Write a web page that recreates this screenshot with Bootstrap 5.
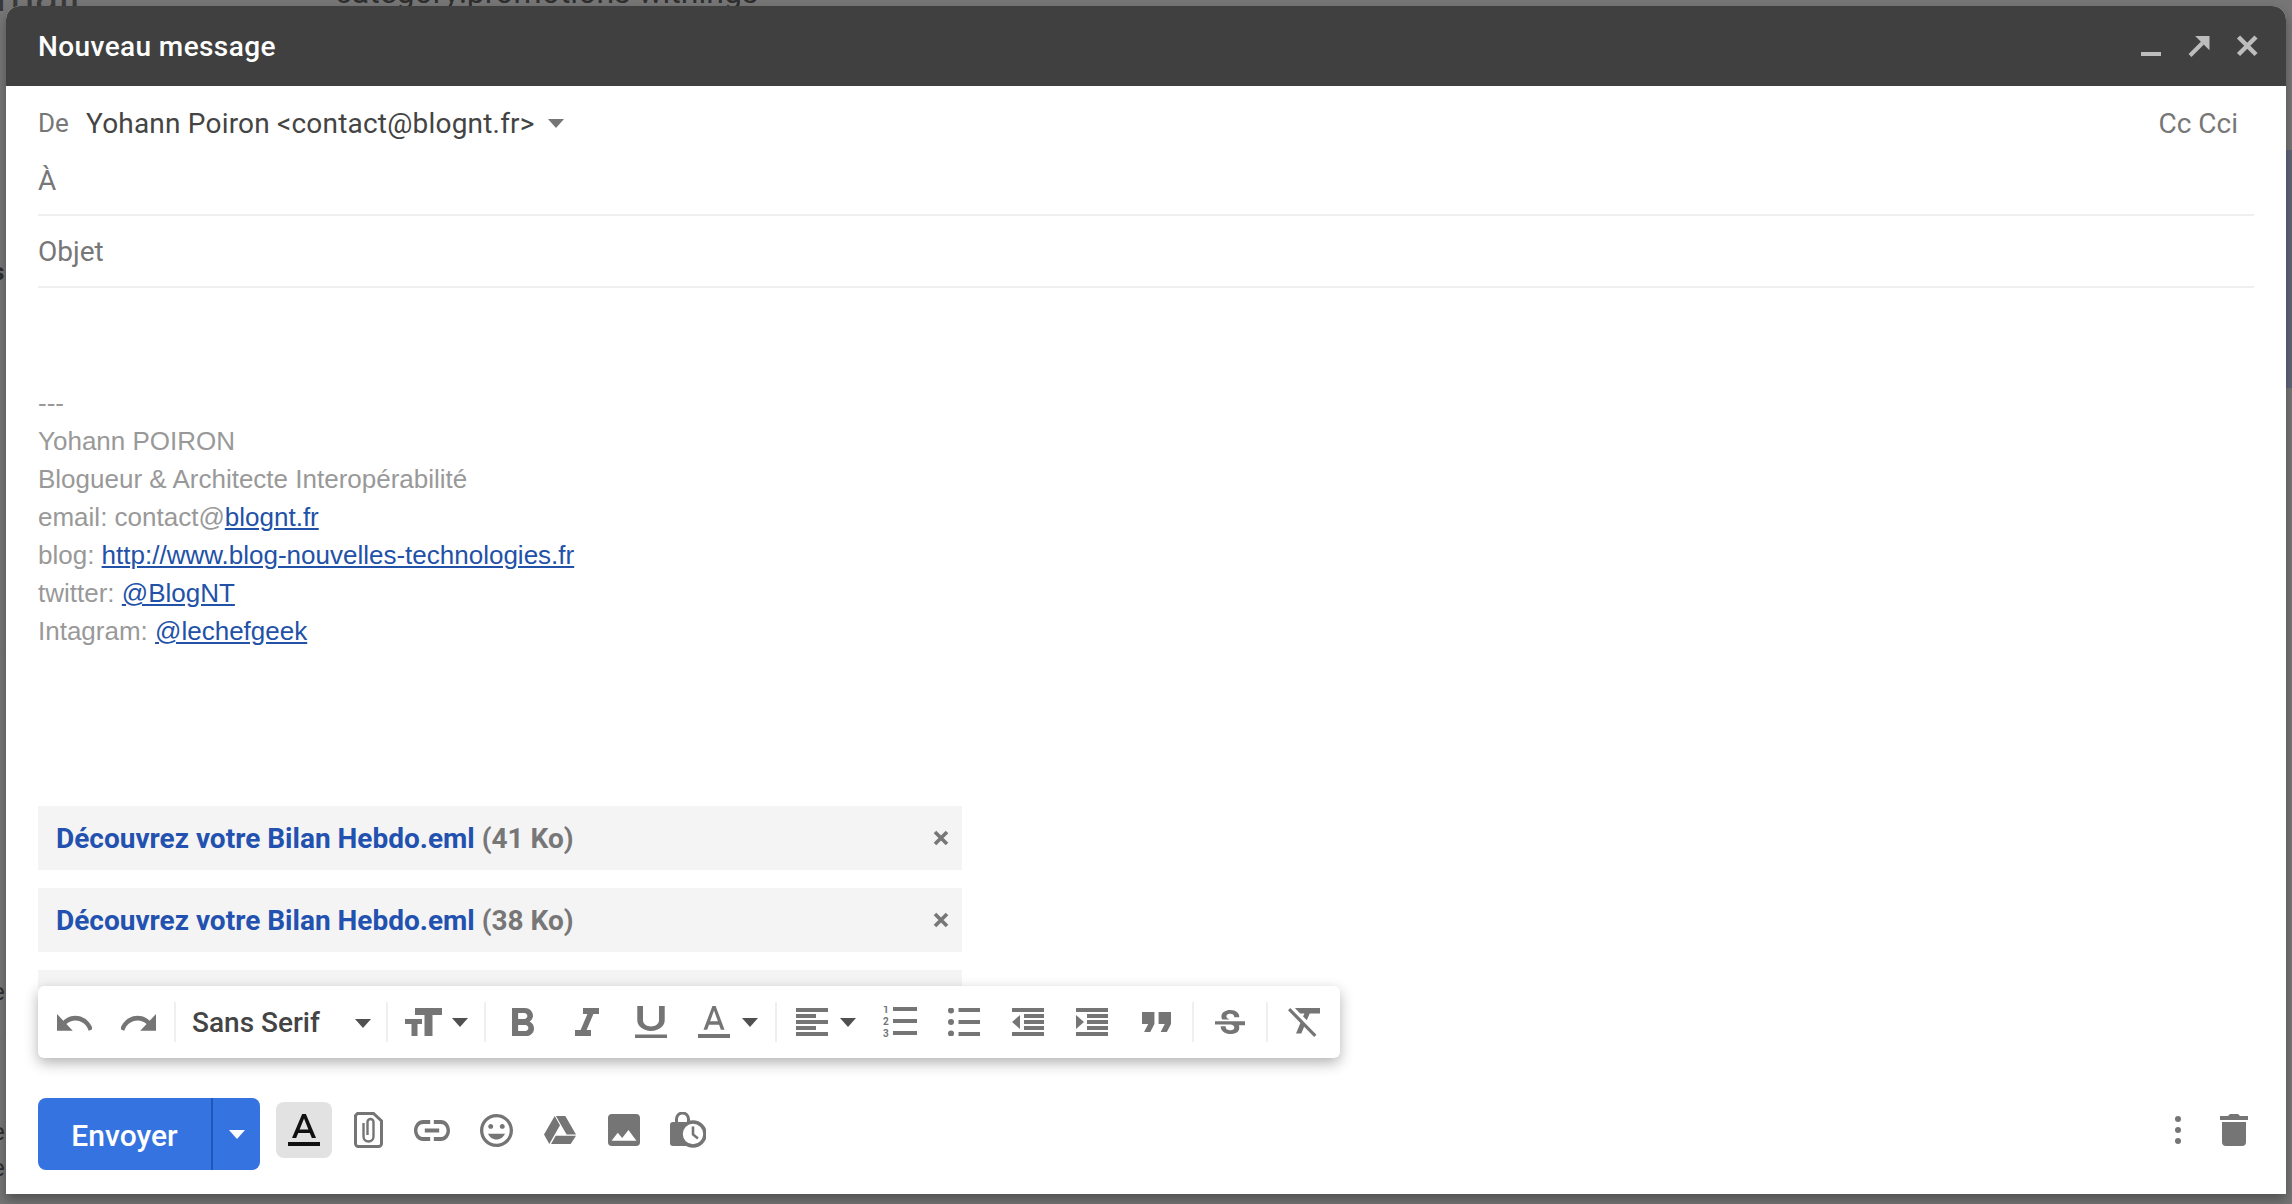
<!DOCTYPE html>
<html lang="fr">
<head>
<meta charset="utf-8">
<title>Nouveau message</title>
<link href="https://cdn.jsdelivr.net/npm/bootstrap@5.3.0/dist/css/bootstrap.min.css" rel="stylesheet">
<style>
html,body{height:100%;margin:0;overflow:hidden}
body{background:#767676;font-family:Roboto,"Liberation Sans",sans-serif;padding:6px 6px 10px 6px;position:relative}
svg{display:block;flex:none}
.ic-g{fill:#757575}
/* backdrop peeking around the window */
.bk-txt{position:absolute;color:#2e2e2e;font-size:32px;line-height:1;white-space:nowrap}
.bk-top1{left:335px;top:-24px}
.bk-top2{left:-4px;top:-26px;font-size:44px;color:#3a3a3a}
.bk-blue{position:absolute;right:0;top:150px;width:6px;height:238px;background:#5f6679}
.bk-l{position:absolute;left:-8px;font-size:24px;line-height:1;color:#2e2e2e}
.bk-l1{top:260px;font-weight:700}.bk-l2{top:645px}.bk-l3{top:980px}.bk-l4{top:1031px}.bk-l5{top:1120px}.bk-l6{top:1156px}
/* window */
.cmp-win{height:1188px;background:#fff;border-radius:14px 14px 0 0;box-shadow:0 6px 12px rgba(0,0,0,.32);overflow:hidden;position:relative;z-index:1}
.cmp-head{height:80px;background:#404040;color:#fff;padding:0 15.5px 0 32px;font-size:28px;font-weight:500;letter-spacing:.4px;flex:none}
.cmp-title{padding-top:2px}
.cmp-body{padding:0 32px 0 32px;flex:1;min-height:0;overflow:hidden}
.cmp-from{height:58px;padding-top:17px;font-size:28px;line-height:42px;color:#444}
.cmp-lbl{color:#777}
.cmp-de{font-size:26px;width:48px;color:#777;margin-top:-2px}
.cmp-yo{letter-spacing:.2px}
.cmp-car{width:0;height:0;border-left:8px solid transparent;border-right:8px solid transparent;border-top:9px solid #757575;display:block;flex:none}
.cmp-car-de{margin-left:13px}
.cmp-cc{color:#777;margin-right:16px}
.cmp-to{height:72px;padding-top:16px;border-bottom:2px solid #efefef;font-size:28px;line-height:42px;color:#777}
.cmp-subj{height:72px;border-bottom:2px solid #efefef;font-size:28px;line-height:42px;color:#777;padding-top:2px}
.cmp-sig{margin-top:96px;font-family:"Liberation Sans",sans-serif;font-size:26px;line-height:38px;color:#999}
.cmp-sig a{color:#2251a8;text-decoration:underline}
.cmp-atts{margin-top:156px}
.cmp-att{width:924px;height:64px;background:#f4f4f4;margin-bottom:18px;padding:0 13px 0 18px;font-size:28px;font-weight:700;color:#777}
.cmp-att-t{padding-top:2px}
.cmp-name{color:#2251b0}
/* formatting toolbar */
.cmp-fmt{position:absolute;left:32px;top:980px;width:1302px;height:72px;background:#fff;border-radius:6px;box-shadow:0 5px 14px rgba(0,0,0,.3);padding-left:4px;z-index:2}
.cmp-sep{width:2px;height:40px;background:#efefef;flex:none}
.cmp-sl{width:64px;height:72px;flex:none}
.cmp-sl72{width:72px}
.cmp-sep-a{margin-left:4px}
.cmp-fam{width:210px;padding:2px 15px 0 16px;font-size:28px;font-weight:500;color:#444;height:72px}
.cmp-dark{border-top-color:#505050}
.cmp-tsize{width:96px;height:72px;padding-left:17px}
.cmp-gap{margin-left:10px}
.cmp-col{width:92px;height:72px;padding-left:15px}
.cmp-ali{width:91px;height:72px;padding-left:19px}
.cmp-gap2{margin-left:12px}
.cmp-b5{margin-left:5px}
/* bottom bar */
.cmp-bar{padding:0 38px 24px 32px;flex:none}
.cmp-send{width:222px;height:72px;background:#3574e0;border-radius:8px;color:#fff;font-size:30px;font-weight:500;overflow:hidden}
.cmp-send-t{width:173px;padding-top:2px}
.cmp-send-s{width:2px;background:#1f58b8}
.cmp-send-c{flex:1}
.cmp-white{border-top-color:#fff}
.cmp-tf-w{margin-left:12px}
.cmp-tf{width:56px;height:56px;background:#e2e2e2;border-radius:8px}
.cmp-b{width:64px;height:64px}
.cmp-trash{width:28px;height:64px;margin-left:10px}
</style>
</head>
<body>
<span class="bk-txt bk-top2">mail</span>
<span class="bk-txt bk-top1">category:promotions withings</span>
<span class="bk-blue"></span>
<span class="bk-l bk-l1">s</span><span class="bk-l bk-l2">r</span><span class="bk-l bk-l3">e</span><span class="bk-l bk-l4">r</span><span class="bk-l bk-l5">e</span><span class="bk-l bk-l6">e</span>

<div class="cmp-win d-flex flex-column">
  <div class="cmp-head d-flex align-items-center justify-content-between">
    <span class="cmp-title">Nouveau message</span>
    <div class="d-flex align-items-center">
      <svg width="48" height="48" viewBox="0 0 48 48" fill="#bdbdbd"><rect x="14" y="30" width="20" height="4"/></svg>
      <svg width="48" height="48" viewBox="0 0 48 48"><g transform="translate(13.5 14)"><path d="M6.6 0H21V14.3z" fill="#bdbdbd"/><path d="M1.5 19.5L14 7" stroke="#bdbdbd" stroke-width="4" fill="none"/></g></svg>
      <svg width="48" height="48" viewBox="0 0 48 48"><path d="M15.5 15L33 32.5M33 15L15.5 32.5" stroke="#bdbdbd" stroke-width="4.5" fill="none"/></svg>
    </div>
  </div>
  <div class="cmp-body">
    <div class="cmp-from d-flex justify-content-between">
      <div class="d-flex align-items-center"><span class="cmp-de">De</span><span class="cmp-yo">Yohann Poiron &lt;contact@blognt.fr&gt;</span><span class="cmp-car cmp-car-de"></span></div>
      <span class="cmp-cc">Cc&nbsp;Cci</span>
    </div>
    <div class="cmp-to">À</div>
    <div class="cmp-subj d-flex align-items-center">Objet</div>
    <div class="cmp-sig">
      <div>---</div>
      <div>Yohann POIRON</div>
      <div>Blogueur &amp; Architecte Interopérabilité</div>
      <div>email: contact@<a href="#">blognt.fr</a></div>
      <div>blog: <a href="#">http://www.blog-nouvelles-technologies.fr</a></div>
      <div>twitter: <a href="#">@BlogNT</a></div>
      <div>Intagram: <a href="#">@lechefgeek</a></div>
    </div>
    <div class="cmp-atts">
      <div class="cmp-att d-flex align-items-center justify-content-between"><span class="cmp-att-t"><span class="cmp-name">Découvrez votre Bilan Hebdo.eml</span> (41 Ko)</span>
        <svg width="16" height="16" viewBox="0 0 16 16"><path d="M2 2l12 12M14 2L2 14" stroke="#777" stroke-width="3.6"/></svg></div>
      <div class="cmp-att d-flex align-items-center justify-content-between"><span class="cmp-att-t"><span class="cmp-name">Découvrez votre Bilan Hebdo.eml</span> (38 Ko)</span>
        <svg width="16" height="16" viewBox="0 0 16 16"><path d="M2 2l12 12M14 2L2 14" stroke="#777" stroke-width="3.6"/></svg></div>
      <div class="cmp-att"></div>
    </div>
  </div>

  <div class="cmp-fmt d-flex align-items-center">
    <div class="cmp-sl d-flex align-items-center justify-content-center"><svg class="ic-g" width="35" height="17" viewBox="2 7 20 9.2" preserveAspectRatio="none"><path d="M12.5 8c-2.65 0-5.05.99-6.9 2.6L2 7v9h9l-3.62-3.62c1.39-1.16 3.16-1.88 5.12-1.88 3.54 0 6.55 2.31 7.6 5.5l2.37-.78C21.08 11.03 17.15 8 12.5 8z"/></svg></div>
    <div class="cmp-sl d-flex align-items-center justify-content-center"><svg class="ic-g" width="35" height="17" viewBox="2 7 20 9.2" preserveAspectRatio="none"><path d="M18.4 10.6C16.55 8.99 14.15 8 11.5 8c-4.65 0-8.58 3.03-9.96 7.22L3.9 16c1.05-3.19 4.05-5.5 7.6-5.5 1.95 0 3.73.72 5.12 1.88L13 16h9V7l-3.6 3.6z"/></svg></div>
    <span class="cmp-sep cmp-sep-a"></span>
    <div class="cmp-fam d-flex align-items-center justify-content-between"><span>Sans Serif</span><span class="cmp-car cmp-dark"></span></div>
    <span class="cmp-sep"></span>
    <div class="cmp-tsize d-flex align-items-center">
      <svg class="ic-g" width="37" height="28" viewBox="0 0 37 28"><path d="M10 0h27v7h-9.5v21h-8V7H10zM0 11h17v5h-4.5v12H6.5V16H0z"/></svg>
      <span class="cmp-car cmp-dark cmp-gap"></span>
    </div>
    <span class="cmp-sep"></span>
    <div class="cmp-sl cmp-b5 d-flex align-items-center justify-content-center"><svg class="ic-g" width="22" height="28" viewBox="7 4 10.75 14" preserveAspectRatio="none"><path d="M15.6 10.79c.97-.67 1.65-1.77 1.65-2.79 0-2.26-1.75-4-4-4H7v14h7.04c2.09 0 3.71-1.7 3.71-3.79 0-1.52-.86-2.82-2.15-3.42zM10 6.5h3c.83 0 1.5.67 1.5 1.5s-.67 1.5-1.5 1.5h-3v-3zm3.5 9H10v-3h3.5c.83 0 1.5.67 1.5 1.5s-.67 1.5-1.5 1.5z"/></svg></div>
    <div class="cmp-sl d-flex align-items-center justify-content-center"><svg class="ic-g" width="24" height="28" viewBox="6 4 12 14" preserveAspectRatio="none"><path d="M10 4v3h2.21l-3.42 8H6v3h8v-3h-2.21l3.42-8H18V4z"/></svg></div>
    <div class="cmp-sl d-flex align-items-center justify-content-center"><svg class="ic-g" width="32" height="32" viewBox="5 3 14 18" preserveAspectRatio="none"><path d="M12 17c3.31 0 6-2.69 6-6V3h-2.5v8c0 1.93-1.57 3.5-3.5 3.5S8.5 12.93 8.5 11V3H6v8c0 3.31 2.69 6 6 6zm-7 2v2h14v-2H5z"/></svg></div>
    <div class="cmp-col d-flex align-items-center">
      <svg class="ic-g" width="32" height="32" viewBox="0 0 32 32"><g transform="translate(5.5 0) scale(1.62 1.7) translate(-5.5 -3)"><path d="M11 3L5.5 17h2.25l1.12-3h6.25l1.12 3h2.25L13 3h-2zm-1.38 9L12 5.67 14.38 12H9.62z"/></g><rect y="28" width="32" height="4"/></svg>
      <span class="cmp-car cmp-dark cmp-gap2"></span>
    </div>
    <span class="cmp-sep"></span>
    <div class="cmp-ali d-flex align-items-center">
      <svg class="ic-g" width="32" height="28" viewBox="0 0 32 28"><path d="M0 0h32v4H0zM0 6h20v4H0zM0 12h32v4H0zM0 18h20v4H0zM0 24h32v4H0z"/></svg>
      <span class="cmp-car cmp-dark cmp-gap2"></span>
    </div>
    <div class="cmp-sl d-flex align-items-center justify-content-center"><svg class="ic-g" width="34" height="32" viewBox="0 0 34 32"><text x="0" y="7" font-family="Roboto,sans-serif" font-size="10" font-weight="700">1</text><text x="0" y="19" font-family="Roboto,sans-serif" font-size="10" font-weight="700">2</text><text x="0" y="31" font-family="Roboto,sans-serif" font-size="10" font-weight="700">3</text><path d="M10 1h24v4H10zM10 13h24v4H10zM10 25h24v4H10z"/></svg></div>
    <div class="cmp-sl d-flex align-items-center justify-content-center"><svg class="ic-g" width="32" height="28" viewBox="0 0 32 28"><circle cx="3" cy="2.5" r="3"/><circle cx="3" cy="14" r="3"/><circle cx="3" cy="25.5" r="3"/><path d="M10.5 0H32v4H10.5zM10.5 12H32v4H10.5zM10.5 24H32v4H10.5z"/></svg></div>
    <div class="cmp-sl d-flex align-items-center justify-content-center"><svg class="ic-g" width="32" height="28" viewBox="0 0 32 28"><path d="M0 0h32v4H0zM12 6h20v4H12zM12 12h20v4H12zM12 18h20v4H12zM0 24h32v4H0zM8 7v14L0 14z"/></svg></div>
    <div class="cmp-sl d-flex align-items-center justify-content-center"><svg class="ic-g" width="32" height="28" viewBox="0 0 32 28"><path d="M0 0h32v4H0zM11 6h21v4H11zM11 12h21v4H11zM11 18h21v4H11zM0 24h32v4H0zM0 7v14l8-7z"/></svg></div>
    <div class="cmp-sl d-flex align-items-center justify-content-center"><svg class="ic-g" width="29" height="20" viewBox="5 7 14 10" preserveAspectRatio="none"><path d="M6 17h3l2-4V7H5v6h3zm8 0h3l2-4V7h-6v6h3z"/></svg></div>
    <span class="cmp-sep cmp-sep-a"></span>
    <div class="cmp-sl cmp-sl72 d-flex align-items-center justify-content-center"><svg class="ic-g" width="30" height="25" viewBox="3 3 18 15.6" preserveAspectRatio="none"><path d="M6.85 7.08C6.85 4.37 9.45 3 12.24 3c1.64 0 3 .49 3.9 1.28.77.65 1.46 1.73 1.46 3.24h-3.01c0-.31-.05-.59-.15-.85-.29-.86-1.2-1.28-2.25-1.28-1.86 0-2.34 1.02-2.34 1.7 0 .48.25.88.74 1.21.38.25.77.48 1.41.7H7.39c-.21-.34-.54-.89-.54-1.92zM21 12v-2H3v2h9.62c1.15.45 1.96.75 1.96 1.97 0 1-.81 1.67-2.28 1.67-1.54 0-2.93-.54-2.93-2.51H6.4c0 .55.08 1.13.24 1.58.81 2.29 3.32 3.3 5.67 3.3 2.25 0 5.27-.88 5.27-3.92 0-.66-.06-1.04-.27-1.58H21z"/></svg></div>
    <span class="cmp-sep"></span>
    <div class="cmp-sl cmp-sl72 d-flex align-items-center justify-content-center"><svg class="ic-g" width="32" height="29" viewBox="2 5 18 16" preserveAspectRatio="none"><path d="M3.27 5L2 6.27l6.97 6.97L6.5 19h3l1.57-3.66L16.73 21 18 19.73 3.55 5.27 3.27 5zM6 5v.18L8.82 8h2.4l-.72 1.68 2.1 2.1L14.21 8H20V5H6z"/></svg></div>
  </div>

  <div class="cmp-bar d-flex align-items-start justify-content-between">
    <div class="d-flex align-items-start">
      <div class="cmp-send d-flex">
        <span class="cmp-send-t d-flex align-items-center justify-content-center">Envoyer</span>
        <span class="cmp-send-s"></span>
        <span class="cmp-send-c d-flex align-items-center justify-content-center"><span class="cmp-car cmp-white"></span></span>
      </div>
      <div class="cmp-b cmp-tf-w d-flex align-items-center justify-content-center">
        <div class="cmp-tf d-flex align-items-center justify-content-center">
          <svg width="32" height="32" viewBox="0 0 32 32" fill="#111"><g transform="translate(4 0) scale(1.85 1.72) translate(-5.5 -3)"><path d="M11 3L5.5 17h2.25l1.12-3h6.25l1.12 3h2.25L13 3h-2zm-1.38 9L12 5.67 14.38 12H9.62z"/></g><rect y="28" width="32" height="4"/></svg>
        </div>
      </div>
      <div class="cmp-b d-flex align-items-center justify-content-center">
        <svg width="29" height="36" viewBox="0 0 29 36"><path d="M3.5 1.5H19.5L27.5 9V31.5a3 3 0 0 1-3 3H4.5a3 3 0 0 1-3-3V3.5z" fill="none" stroke="#757575" stroke-width="3"/><path d="M9.5 11V24.5a5 5 0 0 0 10 0V10a3 3 0 0 0-6 0V23" fill="none" stroke="#757575" stroke-width="2.4"/></svg>
      </div>
      <div class="cmp-b d-flex align-items-center justify-content-center">
        <svg class="ic-g" width="36" height="21" viewBox="2 7 20 10" preserveAspectRatio="none"><path d="M3.9 12c0-1.71 1.39-3.1 3.1-3.1h4V7H7c-2.76 0-5 2.24-5 5s2.24 5 5 5h4v-1.9H7c-1.71 0-3.1-1.39-3.1-3.1zM8 13h8v-2H8v2zm9-6h-4v1.9h4c1.71 0 3.1 1.39 3.1 3.1s-1.39 3.1-3.1 3.1h-4V17h4c2.76 0 5-2.24 5-5s-2.24-5-5-5z"/></svg>
      </div>
      <div class="cmp-b d-flex align-items-center justify-content-center">
        <svg class="ic-g" width="33" height="33" viewBox="2 2 20 20"><path d="M11.99 2C6.47 2 2 6.48 2 12s4.47 10 9.99 10C17.52 22 22 17.52 22 12S17.52 2 11.99 2zM12 20c-4.42 0-8-3.58-8-8s3.58-8 8-8 8 3.58 8 8-3.58 8-8 8zm3.5-9c.83 0 1.5-.67 1.5-1.5S16.33 8 15.5 8 14 8.67 14 9.5s.67 1.5 1.5 1.5zm-7 0c.83 0 1.5-.67 1.5-1.5S9.33 8 8.5 8 7 8.67 7 9.5 7.67 11 8.5 11zm3.5 6.5c2.33 0 4.31-1.46 5.11-3.5H6.89c.8 2.04 2.78 3.5 5.11 3.5z"/></svg>
      </div>
      <div class="cmp-b d-flex align-items-center justify-content-center">
        <svg class="ic-g" width="32" height="28" viewBox="0 0 32 28"><path d="M10.7 0L16 9.2 5.3 28 0 18.5zM11.9 0H21.3L32 18.5H22.6zM11.7 19.8H32L26.7 28H7z"/></svg>
      </div>
      <div class="cmp-b d-flex align-items-center justify-content-center">
        <svg class="ic-g" width="32" height="32" viewBox="3 3 18 18"><path d="M21 19V5c0-1.1-.9-2-2-2H5c-1.1 0-2 .9-2 2v14c0 1.1.9 2 2 2h14c1.1 0 2-.9 2-2zM8.5 13.5l2.5 3.01L14.5 12l4.5 6H5l3.5-4.5z"/></svg>
      </div>
      <div class="cmp-b d-flex align-items-center justify-content-center">
        <svg width="36" height="36" viewBox="0 0 36 36"><path d="M6.5 11V7a6 6 0 0 1 12 0v4" fill="none" stroke="#757575" stroke-width="3"/><rect x="0" y="10" width="26" height="24" rx="3" fill="#757575"/><circle cx="23" cy="22" r="12" fill="#fff" stroke="#757575" stroke-width="3.6"/><path d="M23 14.5V22.5l5 4" fill="none" stroke="#757575" stroke-width="2.6"/></svg>
      </div>
    </div>
    <div class="d-flex align-items-start">
      <div class="cmp-b d-flex align-items-center justify-content-center">
        <svg class="ic-g" width="6" height="28" viewBox="0 0 6 28"><circle cx="3" cy="3" r="3"/><circle cx="3" cy="14" r="3"/><circle cx="3" cy="25" r="3"/></svg>
      </div>
      <div class="cmp-trash d-flex align-items-center">
        <svg class="ic-g" width="28" height="32" viewBox="0 0 28 32"><path d="M10 0h8l2 2h8v4H0V2h8zM2 8h24v20a4 4 0 0 1-4 4H6a4 4 0 0 1-4-4z"/></svg>
      </div>
    </div>
  </div>
</div>
</body>
</html>
